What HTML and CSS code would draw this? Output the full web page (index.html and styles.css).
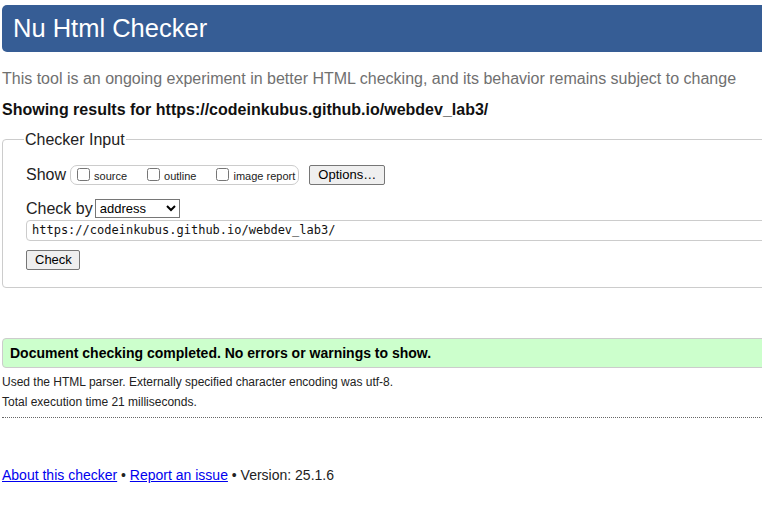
FILE: index.html
```html
<!DOCTYPE html>
<html lang="en">
<head>
<meta charset="utf-8">
<title>Nu Html Checker</title>
<link rel="stylesheet" href="styles.css">
</head>
<body>
<h1 class="banner">Nu Html Checker</h1>
<p class="tagline">This tool is an ongoing experiment in better HTML checking, and its behavior remains subject to change</p>
<p class="showing">Showing results for https://codeinkubus.github.io/webdev_lab3/</p>
<fieldset class="input-box">
  <legend class="input-legend">Checker Input</legend>
  <div class="row show-row">
    <span class="row-label">Show</span>
    <span class="show-options">
      <label class="opt"><input type="checkbox" class="cb">source</label>
      <label class="opt"><input type="checkbox" class="cb">outline</label>
      <label class="opt"><input type="checkbox" class="cb">image report</label>
    </span>
    <button class="btn options-btn" type="button">Options…</button>
  </div>
  <div class="row checkby-row">
    <span class="row-label">Check by</span>
    <select class="select"><option>address</option></select>
  </div>
  <div class="url-field">https://codeinkubus.github.io/webdev_lab3/</div>
  <button class="btn check-btn" type="button">Check</button>
</fieldset>
<p class="success">Document checking completed. No errors or warnings to show.</p>
<p class="details first">Used the HTML parser. Externally specified character encoding was utf-8.</p>
<p class="details">Total execution time 21 milliseconds.</p>
<hr class="sep">
<p class="footer"><a href="#">About this checker</a> • <a href="#">Report an issue</a> • Version: 25.1.6</p>
</body>
</html>
```
FILE: styles.css
```css
html { overflow: hidden; }
body {
  margin: 0;
  padding: 0 0 0 2px;
  font-family: "Liberation Sans", Arial, sans-serif;
  color: #111;
  background: #fff;
}
.banner {
  margin: 5px -40px 0 0;
  height: 47px;
  box-sizing: border-box;
  padding: 9px 0 0 11px;
  background: #365d95;
  color: #fff;
  font-size: 25.5px;
  font-weight: normal;
  line-height: 29px;
  border-radius: 5px;
}
.tagline {
  margin: 17px 0 0;
  font-size: 16px;
  line-height: 19px;
  color: #707070;
  white-space: nowrap;
}
.showing {
  margin: 12px 0 0;
  font-size: 16px;
  line-height: 19px;
  font-weight: bold;
  white-space: nowrap;
}
.input-box {
  margin: 11px -40px 0 0;
  padding: 15px 0 17px 23px;
  border: 1px solid #ccc;
  border-radius: 4px;
}
.input-legend {
  margin-left: -2px;
  padding: 0 1px;
  font-size: 16px;
  line-height: 19px;
  color: #222;
}
.row {
  display: flex;
  align-items: center;
}
.row-label {
  font-size: 16px;
  line-height: 19px;
  color: #222;
}
.show-row { height: 21px; }
.show-options {
  display: flex;
  align-items: center;
  margin-left: 4px;
  height: 18px;
  padding: 0 3px 0 3px;
  border: 1px solid #ccc;
  border-radius: 7px;
  font-size: 11px;
}
.opt {
  display: flex;
  align-items: center;
  margin-right: 17px;
  color: #222;
  padding-top: 2px;
}
.opt:last-child { margin-right: 0; }
.cb {
  width: 13px;
  height: 13px;
  margin: -2px 4px 0 3px;
}
.btn {
  font-family: "Liberation Sans", Arial, sans-serif;
  font-size: 13px;
  color: #000;
  background: #efefef;
  border: 1px solid #767676;
  border-radius: 2px;
  height: 20px;
  padding: 0 8px;
  line-height: 16px;
}
.options-btn {
  margin-left: 10px;
  width: 76px;
}
.checkby-row { margin-top: 13px; height: 20px; }
.select {
  margin-left: 2px;
  width: 85px;
  height: 19px;
  font-family: "Liberation Sans", Arial, sans-serif;
  font-size: 13px;
  color: #000;
  border: 1px solid #767676;
  border-radius: 0;
  background: #fff;
}
.url-field {
  margin-top: 2px;
  height: 21px;
  box-sizing: border-box;
  padding: 2px 0 0 5px;
  border: 1px solid #ccc;
  border-radius: 4px;
  font-family: "DejaVu Sans Mono", monospace;
  font-size: 12px;
  line-height: 15px;
  color: #111;
  white-space: nowrap;
}
.check-btn {
  display: block;
  margin-top: 9px;
  width: 54px;
}
.success {
  margin: 50px -40px 0 0;
  height: 30px;
  box-sizing: border-box;
  padding: 6px 0 0 7px;
  background: #ccffcc;
  border: 1px solid #ccc;
  border-radius: 4px;
  font-size: 14px;
  font-weight: bold;
  line-height: 17px;
  color: #000;
}
.details {
  margin: 6px 0 0;
  font-size: 12px;
  line-height: 14px;
  color: #222;
}
.details.first { margin-top: 7px; }
.sep {
  margin: 8px -40px 0 0;
  border: 0;
  border-top: 1px dotted #666;
  height: 0;
}
.footer {
  margin: 49px 0 0;
  font-size: 14px;
  line-height: 17px;
  color: #222;
}
.footer a { color: #0000ee; }
```
